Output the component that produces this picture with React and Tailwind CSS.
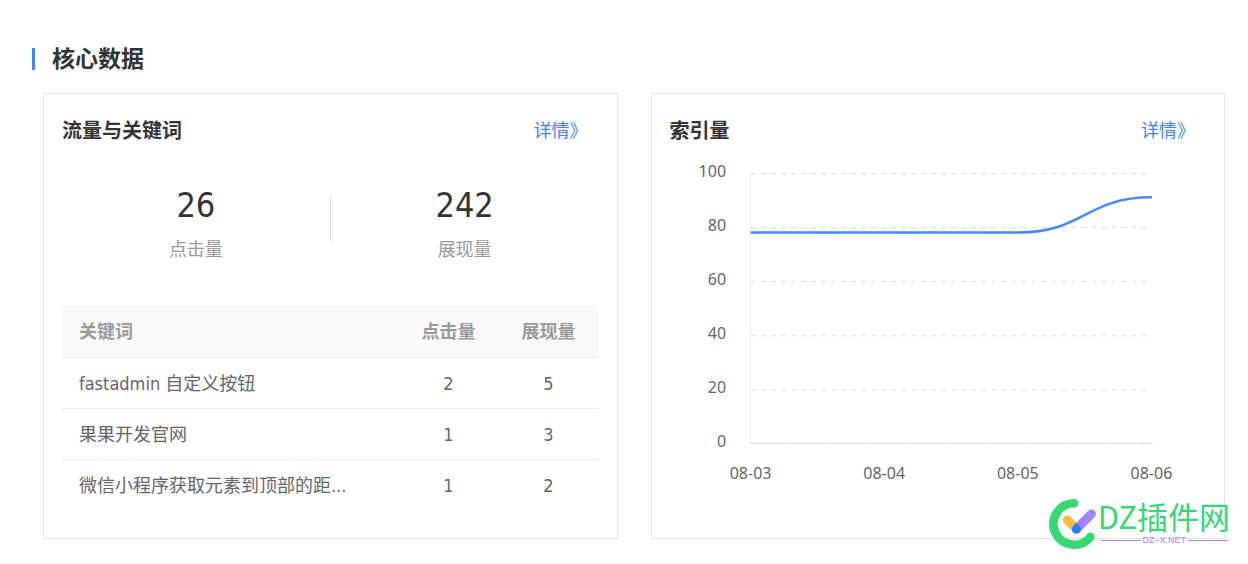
const keywords = [
  { word: 'fastadmin 自定义按钮', clicks: 2, views: 5 },
  { word: '果果开发官网', clicks: 1, views: 3 },
  { word: '微信小程序获取元素到顶部的距...', clicks: 1, views: 2 },
];

const dates = ['08-03', '08-04', '08-05', '08-06'];
const ticks = [100, 80, 60, 40, 20, 0];

function Card({ title, children }) {
  return (
    <section className="relative min-w-0 flex-1 border border-[#e4e4e4] px-[18px] pt-[23px] pb-7">
      <header className="flex h-7 items-center justify-between pr-[11px]">
        <h3 className="text-[20px] leading-7 font-bold text-[#333]">{title}</h3>
        <a href="#" className="text-[18px] leading-7 text-[#4083ff]">
          详情》
        </a>
      </header>
      {children}
    </section>
  );
}

function Stat({ value, label }) {
  return (
    <div className="flex flex-1 flex-col items-center">
      <span className="text-[34px] leading-10 text-[#333]">{value}</span>
      <span className="mt-[13px] text-[18px] leading-6 text-[#999]">{label}</span>
    </div>
  );
}

function KeywordTable() {
  return (
    <table className="mt-[43px] w-full table-fixed border-collapse text-[18px] leading-6">
      <thead>
        <tr className="h-[52px] border-b border-[#ededed] bg-[#f9f9f9] text-[#999]">
          <th scope="col" className="pt-[2px] pl-[17px] text-left font-bold">关键词</th>
          <th scope="col" className="w-[100px] pt-[2px] font-bold">点击量</th>
          <th scope="col" className="w-[100px] pt-[2px] font-bold">展现量</th>
        </tr>
      </thead>
      <tbody className="text-[#666]">
        {keywords.map((k) => (
          <tr key={k.word} className="h-[51px] border-b border-[#ededed] last:border-b-0">
            <td className="truncate pt-[2px] pl-[17px]">{k.word}</td>
            <td className="pt-[2px] text-center">{k.clicks}</td>
            <td className="pt-[2px] text-center">{k.views}</td>
          </tr>
        ))}
      </tbody>
    </table>
  );
}

function IndexChart() {
  return (
    <svg
      viewBox="0 0 536 336"
      className="mt-[7px] block w-full font-['Noto_Sans',sans-serif] text-[16px]"
      role="img"
      aria-label="索引量"
    >
      {ticks.map((t, i) => (
        <g key={t}>
          <text x="56" y={25 + i * 54} textAnchor="end" fill="#666">{t}</text>
          <line x1="81" x2="481" y1={21.5 + i * 54} y2={21.5 + i * 54} stroke="#dedede" strokeDasharray="5 5" />
        </g>
      ))}
      <line x1="80.5" x2="80.5" y1="21" y2="291" stroke="#ececec" />
      <line x1="80" x2="482" y1="291" y2="291" stroke="#dedede" />
      <path
        d="M80.5 80.4 H347.5 C414.5 80.4 414.5 45.3 481.5 45.3"
        fill="none"
        stroke="#4589ff"
        strokeWidth="2.5"
      />
      {dates.map((d, i) => (
        <text key={d} x={80.5 + i * 133.5} y="327" textAnchor="middle" fill="#666">{d}</text>
      ))}
    </svg>
  );
}

function Watermark() {
  return (
    <div className="absolute -right-[6px] -bottom-3 flex items-start">
      <svg width="52" height="52" viewBox="0 0 52 52" fill="none" strokeLinecap="round" aria-hidden="true">
        <path d="M25.3 5.3 A20.7 20.7 0 1 0 41.4 38.8" stroke="#35d873" strokeWidth="8.6" />
        <path d="M18.4 22 L27.4 31" stroke="#ffb940" strokeWidth="9" />
        <path d="M27.4 31 L42.4 16" stroke="#a683ff" strokeWidth="9" />
        <path
          d="M27.4 25 L30.6 27.9 A4.5 4.5 0 0 1 30.6 34.2 A4.5 4.5 0 0 1 24.2 34.2 A4.5 4.5 0 0 1 24.2 27.9 Z"
          fill="#1684fc"
        />
      </svg>
      <div className="-ml-[3px] flex flex-col">
        <span className="text-[31px] leading-9 whitespace-nowrap text-[#35d873] font-['Noto_Sans_CJK_SC',sans-serif]">
          DZ插件网
        </span>
        <span className="flex items-center gap-[2px] pr-[2px] pl-[3px] font-['Liberation_Sans',sans-serif] text-[9px] leading-3 text-[#a683ff]">
          <span className="h-px flex-1 bg-[#a683ff]" />
          DZ–X.NET
          <span className="h-px flex-1 bg-[#a683ff]" />
        </span>
      </div>
    </div>
  );
}

export default function App() {
  return (
    <main className="min-h-screen bg-white pt-[45px] pr-[23px] pb-6 pl-8 font-['DejaVu_Sans_Condensed','Noto_Sans_CJK_SC',sans-serif]">
      <div className="flex h-7 items-center gap-[17px]">
        <span className="h-[22px] w-[3px] bg-[#4083ff]" />
        <h2 className="text-[23px] leading-7 font-bold text-[#333]">核心数据</h2>
      </div>
      <div className="mt-5 ml-[11px] flex gap-[33px]">
        <Card title="流量与关键词">
          <div className="mt-10 flex items-start">
            <Stat value="26" label="点击量" />
            <span className="mt-[10px] h-[47px] w-px bg-[#e4e4e4]" />
            <Stat value="242" label="展现量" />
          </div>
          <KeywordTable />
        </Card>
        <Card title="索引量">
          <IndexChart />
          <Watermark />
        </Card>
      </div>
    </main>
  );
}
